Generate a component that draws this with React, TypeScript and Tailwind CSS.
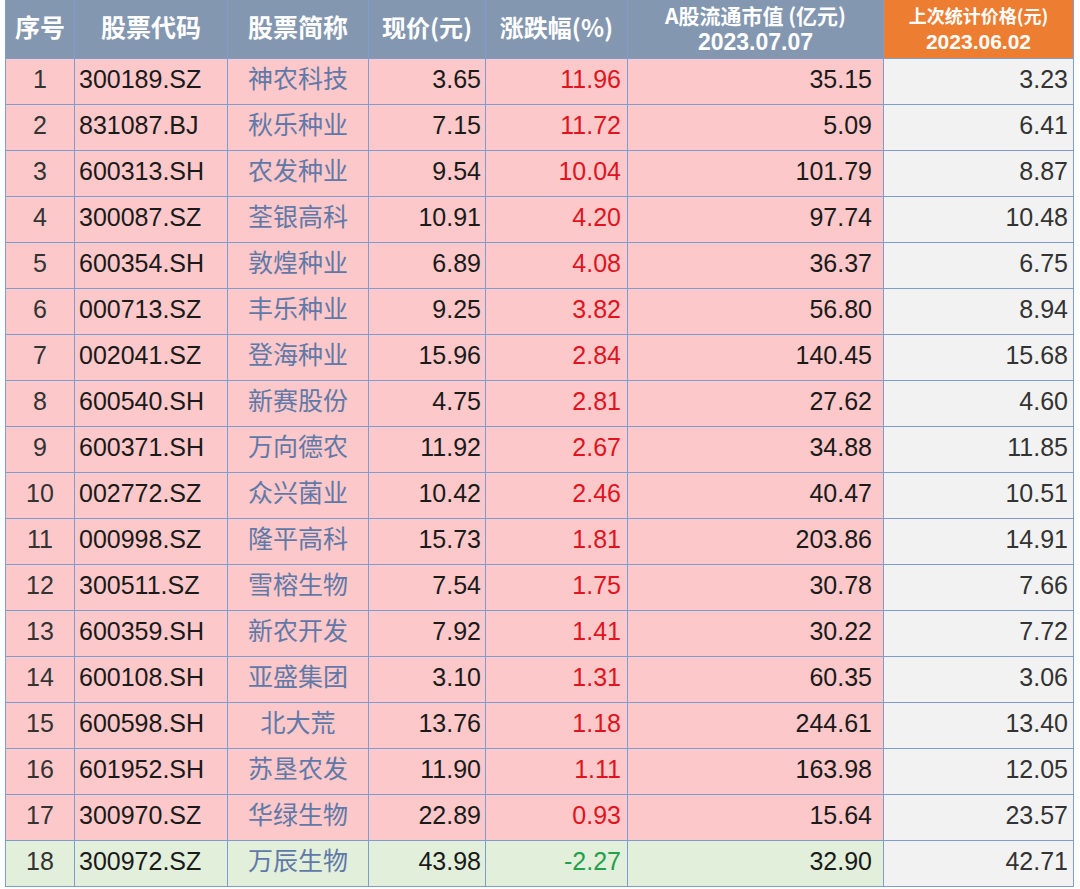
import React from 'react';

type Row = [string, string, string, string, string, string, string];

const rows: Row[] = [
    ['1', '300189.SZ', '神农科技', '3.65', '11.96', '35.15', '3.23'],
    ['2', '831087.BJ', '秋乐种业', '7.15', '11.72', '5.09', '6.41'],
    ['3', '600313.SH', '农发种业', '9.54', '10.04', '101.79', '8.87'],
    ['4', '300087.SZ', '荃银高科', '10.91', '4.20', '97.74', '10.48'],
    ['5', '600354.SH', '敦煌种业', '6.89', '4.08', '36.37', '6.75'],
    ['6', '000713.SZ', '丰乐种业', '9.25', '3.82', '56.80', '8.94'],
    ['7', '002041.SZ', '登海种业', '15.96', '2.84', '140.45', '15.68'],
    ['8', '600540.SH', '新赛股份', '4.75', '2.81', '27.62', '4.60'],
    ['9', '600371.SH', '万向德农', '11.92', '2.67', '34.88', '11.85'],
    ['10', '002772.SZ', '众兴菌业', '10.42', '2.46', '40.47', '10.51'],
    ['11', '000998.SZ', '隆平高科', '15.73', '1.81', '203.86', '14.91'],
    ['12', '300511.SZ', '雪榕生物', '7.54', '1.75', '30.78', '7.66'],
    ['13', '600359.SH', '新农开发', '7.92', '1.41', '30.22', '7.72'],
    ['14', '600108.SH', '亚盛集团', '3.10', '1.31', '60.35', '3.06'],
    ['15', '600598.SH', '北大荒', '13.76', '1.18', '244.61', '13.40'],
    ['16', '601952.SH', '苏垦农发', '11.90', '1.11', '163.98', '12.05'],
    ['17', '300970.SZ', '华绿生物', '22.89', '0.93', '15.64', '23.57'],
    ['18', '300972.SZ', '万辰生物', '43.98', '-2.27', '32.90', '42.71'],
];

const cell = 'border border-[#7d9dd0] p-0';
const num = "font-['Liberation_Sans',Arial,sans-serif] pb-[4px]";
const cjk = "font-['Noto_Sans_CJK_SC',sans-serif]";
const latin = "font-['Liberation_Sans',Arial,sans-serif]";
const head = `${cell} border-t-0 bg-[#8497b0] pb-[4px]`;

export default function App() {
    return (
        <div className="w-[1080px] h-[889px] bg-white pl-[5px]">
            <table className="table-fixed border-collapse text-[25px] leading-none">
                <colgroup>
                    <col className="w-[69px]" />
                    <col className="w-[153px]" />
                    <col className="w-[141px]" />
                    <col className="w-[117px]" />
                    <col className="w-[142px]" />
                    <col className="w-[256px]" />
                    <col className="w-[190px]" />
                </colgroup>
                <thead>
                    {/* Header */}
                    <tr className={`h-[58px] text-white font-bold ${cjk}`}>
                        <th className={`${head} text-[25px]`}>序号</th>
                        <th className={`${head} text-[25px]`}>股票代码</th>
                        <th className={`${head} text-[25px]`}>股票简称</th>
                        <th className={`${head} text-[24px]`}>现价(元)</th>
                        <th className={`${head} text-[24px]`}>涨跌幅(%)</th>
                        <th className={`${cell} border-t-0 bg-[#8497b0]`}>
                            <div className="text-[21px] leading-[30px]">A股流通市值 (亿元)</div>
                            <div className={`${latin} text-[23px] leading-[25px] pb-[2px]`}>2023.07.07</div>
                        </th>
                        <th className={`${cell} border-t-0 bg-[#ed7d31]`}>
                            <div className="text-[18px] leading-[28px]">上次统计价格(元)</div>
                            <div className={`${latin} text-[21px] leading-[25px] pb-[2px]`}>2023.06.02</div>
                        </th>
                    </tr>
                </thead>
                <tbody>
                    {rows.map((r) => {
                        const down = r[4].startsWith('-');
                        const bg = down ? 'bg-[#e2efda]' : 'bg-[#fcc8c9]';
                        return (
                            <tr key={r[0]} className="h-[46px]">
                                <td className={`${cell} ${bg} ${num} text-center text-[#333]`}>{r[0]}</td>
                                <td className={`${cell} ${bg} ${num} text-left pl-[4px] text-[#1a1a1a]`}>{r[1]}</td>
                                <td className={`${cell} ${bg} ${cjk} pb-[7px] text-center text-[#6079a8]`}>{r[2]}</td>
                                <td className={`${cell} ${bg} ${num} text-right pr-[4px] text-[#1a1a1a]`}>{r[3]}</td>
                                <td
                                    className={`${cell} ${bg} ${num} text-right pr-[6px] ${
                                        down ? 'text-[#22a04b]' : 'text-[#e0141e]'
                                    }`}
                                >
                                    {r[4]}
                                </td>
                                <td className={`${cell} ${bg} ${num} text-right pr-[11px] text-[#1a1a1a]`}>{r[5]}</td>
                                <td className={`${cell} bg-[#f2f2f2] ${num} text-right pr-[5px] text-[#333]`}>{r[6]}</td>
                            </tr>
                        );
                    })}
                </tbody>
            </table>
        </div>
    );
}
